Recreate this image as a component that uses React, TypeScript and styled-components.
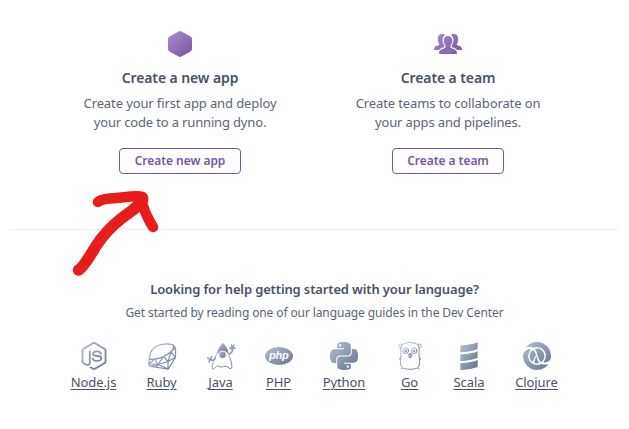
import React from 'react';
import styled, { createGlobalStyle } from 'styled-components';
import { SiNodedotjs, SiPython, SiScala, SiClojure } from 'react-icons/si';

const GlobalStyle = createGlobalStyle`
  * { box-sizing: border-box; }
  body {
    margin: 0;
    background: #fff;
    color: #596675;
    font-family: "Noto Sans", "Open Sans", sans-serif;
  }
`;

const Page = styled.main`
  position: relative;
  width: 629px;
  height: 429px;
  padding: 0 11px;
  overflow: hidden;
`;

const Actions = styled.section`
  display: grid;
  grid-template-columns: 268px 268px;
  height: 230px;
  padding: 28px 0 0 35px;
  border-bottom: 1px solid #efefef;
`;

const Card = styled.article`
  display: flex;
  flex-direction: column;
  align-items: center;
  text-align: center;
`;

const CardIcon = styled.svg`
  width: 32px;
  height: 32px;
`;

const CardTitle = styled.h2`
  margin: 8px 0 6px;
  font-size: 14px;
  line-height: 20px;
  font-weight: 600;
  color: #475365;
  letter-spacing: -0.1px;
  white-space: nowrap;
`;

const CardText = styled.p`
  margin: 0;
  height: 38px;
  font-size: 13px;
  line-height: 19px;
  white-space: nowrap;
`;

const Line = styled.span<{ $tracking: number }>`
  display: block;
  letter-spacing: ${(p) => p.$tracking}px;
`;

const ActionButton = styled.button<{ $width: number }>`
  width: ${(p) => p.$width}px;
  height: 26px;
  margin-top: 16px;
  padding: 0 0 1px;
  border: 1px solid #79589f;
  border-radius: 4px;
  background: #fff;
  color: #79589f;
  font: 600 12px/22px "Noto Sans", "Open Sans", sans-serif;
  letter-spacing: -0.04px;
  white-space: nowrap;
`;

const Help = styled.section`
  display: flex;
  flex-direction: column;
  align-items: center;
  padding-top: 49px;
`;

const HelpTitle = styled.h3`
  margin: 0;
  font-size: 13px;
  line-height: 20px;
  font-weight: 600;
  color: #475365;
  letter-spacing: -0.135px;
`;

const HelpText = styled.p`
  margin: 4px 0 0;
  font-size: 12px;
  line-height: 19px;
  letter-spacing: -0.115px;
`;

const Languages = styled.nav`
  display: flex;
  gap: 30px;
  margin-top: 20px;
`;

const Language = styled.a<{ $width: number }>`
  display: flex;
  flex-direction: column;
  align-items: center;
  width: ${(p) => p.$width}px;
  color: #475365;
  font-size: 13px;
  line-height: 18px;
  letter-spacing: -0.08px;
  white-space: nowrap;

  svg {
    flex: none;
    width: 28px;
    height: 28px;
    margin-bottom: 3px;
    overflow: visible;
  }
  span {
    text-decoration: underline;
    text-underline-offset: 2px;
    text-decoration-thickness: 1px;
  }
`;

const PhpLabel = styled.text`
  font: italic bold 11px "Liberation Sans", sans-serif;
  letter-spacing: -0.2px;
  text-anchor: middle;
`;

const slate = 'url(#slate)';

const Defs = styled.svg`
  position: absolute;
  width: 0;
  height: 0;
`;

const Arrow = styled.svg`
  position: absolute;
  left: 68px;
  top: 184px;
  width: 96px;
  height: 96px;
  pointer-events: none;
`;

const NodeIcon = () => <SiNodedotjs fill={slate} />;
const PythonIcon = () => <SiPython fill={slate} />;
const ScalaIcon = () => <SiScala fill={slate} />;
const ClojureIcon = () => <SiClojure fill={slate} />;

const PhpIcon = () => (
  <svg viewBox="0 0 28 28">
    <ellipse cx="14" cy="14" rx="14" ry="9" fill={slate} />
    <PhpLabel x="13.7" y="16.8" fill="#fff">php</PhpLabel>
  </svg>
);

const RubyIcon = () => (
  <svg viewBox="0 0 28 28" fill="none" stroke={slate} strokeWidth="1.2" strokeLinejoin="round">
    <path d="M1.500 15C2 10 5 5.500 10 3.500 14 1.800 20 1.500 24 2.500 27 3.500 26 7 23 9.800 18 14 11 17 5 17.300 2.500 17.500 1.300 16.800 1.500 15Z" />
    <path d="M1.500 15 .8 22q0 2 2 2.300L19.500 27q1 0 1.500-1l6.300-10.500q.5-5 .2-9Q27 3.500 24 2.500" />
    <path d="m1 22 5.500-5 3.500 5.500 5.500-8L20 19.500l3-9.700 4.300 5.700M1 22l9 .5 10-3 7.300-4M10 22.500 3 24.300M10 22.500l10 4.500v-7.500M10 22.500l-1.500 3M23 9.800l4.500-4" />
  </svg>
);

const JavaIcon = () => (
  <svg viewBox="0 0 28 28" fill="none" stroke={slate} strokeWidth="1" strokeLinecap="round" strokeLinejoin="round">
    <path fill={slate} stroke="none" d="M16 1C13.500 3 10.500 7.500 10 11.500c0 1 .5.500 1.500-.5 1-1.500 2.500-2.300 4.300-2.300 2.200 0 3.700 1 4.700 2.500.8.900 1 .500 1-.5C21 7 18 3 16 1Z" />
    <circle cx="15.500" cy="12.800" r="3.300" fill={slate} stroke="none" />
    <path d="M9.800 12C7 17 5 22 5.200 26c0 2 2 1 3.500-1 1.500-1.500 3-1 4.300-.2 2 .8 3-.5 5-.6 3 0 4 2.800 6 2.300 2-1 .4-8-2.500-14" />
    <path d="M8.500 16c-2 3-4 3-5.500 1M3 17l-2.500-1M3 17l-1 3M3 17l2-2.500M3 17l2 1M22 12c3-1 4-3 3-5m0 0-2-1m2 1-.5-4m.5 4 2-4m-2 4 3-1" strokeWidth="1.400" />
  </svg>
);

const GoIcon = () => (
  <svg viewBox="0 0 28 28" fill="none" stroke={slate} strokeWidth=".95" strokeLinecap="round" strokeLinejoin="round">
    <path d="M5 5C5.500 2 9 .6 14 .6S22.500 2 23 5c.8 2-.2 5 0 8 .3 5 1.500 9-.5 12-2 3-15 3-17 0-2-3-.5-8-.5-12C5.200 10 4.200 7 5 5Z" />
    <path d="M5.300 6C3 6 1.800 4.500 3 3s2.500-1 3.500 0M22.700 6C25 6 26.200 4.500 25 3s-2.500-1-3.500 0M4.700 16c-1.700.2-2 .8-1.200 1.500M23.300 16c1.700.2 2 .8 1.200 1.500M6 26l-1 1M22 26l1 1" />
    <circle cx="9.800" cy="8.700" r="2.800" />
    <circle cx="18.200" cy="8.700" r="2.800" />
    <circle cx="9.600" cy="8.800" r=".8" fill={slate} />
    <circle cx="17.900" cy="8.800" r=".8" fill={slate} />
    <path d="M12.500 12.500c1-.8 2-.8 3 0 1.300 1.300.3 1.800-1.500 1.500-1.800.2-2.800-.2-1.500-1.500ZM13 14.200v1.500h2v-1.500" />
    <ellipse cx="14" cy="12.200" rx="1.300" ry=".7" fill={slate} />
  </svg>
);

const languages = [
  { name: 'Node.js', width: 46, Icon: NodeIcon },
  { name: 'Ruby', width: 30, Icon: RubyIcon },
  { name: 'Java', width: 28, Icon: JavaIcon },
  { name: 'PHP', width: 28, Icon: PhpIcon },
  { name: 'Python', width: 43, Icon: PythonIcon },
  { name: 'Go', width: 28, Icon: GoIcon },
  { name: 'Scala', width: 31, Icon: ScalaIcon },
  { name: 'Clojure', width: 44, Icon: ClojureIcon },
];

export default function App() {
  return (
    <>
      <GlobalStyle />
      <Page>
        <Defs aria-hidden="true">
          <defs>
            <linearGradient id="purple" gradientUnits="userSpaceOnUse" x1="5" y1="4" x2="27" y2="28">
              <stop stopColor="#a98bcb" />
              <stop offset="1" stopColor="#79589f" />
            </linearGradient>
            <linearGradient id="slate" x1="0" y1="0" x2="1" y2="1">
              <stop stopColor="#b4c0d2" />
              <stop offset="1" stopColor="#65738e" />
            </linearGradient>
          </defs>
        </Defs>
        <Actions>
          <Card>
            <CardIcon viewBox="0 0 32 32">
              <path fill="url(#purple)" d="M14.500 3.400q1.500-.8 3 0l9 5.100q1.500.9 1.500 2.500v10q0 1.600-1.500 2.500l-9 5.100q-1.500.8-3 0l-9-5.100Q4 22.600 4 21V11q0-1.600 1.500-2.500Z" />
            </CardIcon>
            <CardTitle>Create a new app</CardTitle>
            <CardText>
              <Line $tracking={-0.11}>Create your first app and deploy</Line>
              <Line $tracking={-0.16}>your code to a running dyno.</Line>
            </CardText>
            <ActionButton $width={122}>Create new app</ActionButton>
          </Card>
          <Card>
            <CardIcon viewBox="0 0 32 32">
              <g fill="url(#purple)">
                <path d="M16 8c3 0 4.500 2 4.300 5-.1 2-1 3.500-1.900 4.800-.4 1.700.6 2.300 2.600 3 2.600.8 4 2 4 4.200 0 .7-.4 1-1 1H8c-.6 0-1-.3-1-1 0-2.200 1.400-3.400 4-4.200 2-.7 3-1.300 2.600-3-.9-1.300-1.800-2.800-1.900-4.800C11.500 10 13 8 16 8Z" />
                <path d="M10 6c1.300 0 2.300.4 3 1.300-2.500 1.500-3 4.400-2 7.700.4 1.300 1 2.300 1.500 3 .3.900-.2 1-1.500 1.500-2 .7-3 1.300-4 2.500H2.500c-.4 0-.6-.3-.5-.8.200-2 1.500-3.200 3.700-3.700 1.300-.4 1.800-.8 1.500-1.600-.9-1.100-1.500-2.500-1.400-4.700C5.800 8 7 6 10 6Z" />
                <path d="M22 6c-1.300 0-2.300.4-3 1.300 2.500 1.500 3 4.400 2 7.700-.4 1.300-1 2.300-1.500 3-.3.900.2 1 1.500 1.500 2 .7 3 1.300 4 2.500h4.500c.4 0 .6-.3.500-.8-.2-2-1.500-3.200-3.700-3.700-1.300-.4-1.800-.8-1.500-1.600.9-1.100 1.500-2.500 1.400-4.700C26.200 8 25 6 22 6Z" />
              </g>
            </CardIcon>
            <CardTitle>Create a team</CardTitle>
            <CardText>
              <Line $tracking={-0.11}>Create teams to collaborate on</Line>
              <Line $tracking={-0.14}>your apps and pipelines.</Line>
            </CardText>
            <ActionButton $width={112}>Create a team</ActionButton>
          </Card>
        </Actions>
        <Help>
          <HelpTitle>Looking for help getting started with your language?</HelpTitle>
          <HelpText>Get started by reading one of our language guides in the Dev Center</HelpText>
          <Languages>
            {languages.map(({ name, width, Icon }) => (
              <Language key={name} $width={width}>
                <Icon />
                <span>{name}</span>
              </Language>
            ))}
          </Languages>
        </Help>
        <Arrow viewBox="68 184 96 96" fill="none" stroke="#e71d1c" strokeLinecap="round" strokeLinejoin="round">
          <path strokeWidth="11.500" d="M78.500 270C84 267 91 254 96 246C103 235 113 225 122 218C132 210 139 207 142 199" />
          <path strokeWidth="10.500" d="M98 202C103 198 108 199 116 198C127 197 137 195 142.500 197Q144 199 142 203Q146 216 153 227" />
        </Arrow>
      </Page>
    </>
  );
}
